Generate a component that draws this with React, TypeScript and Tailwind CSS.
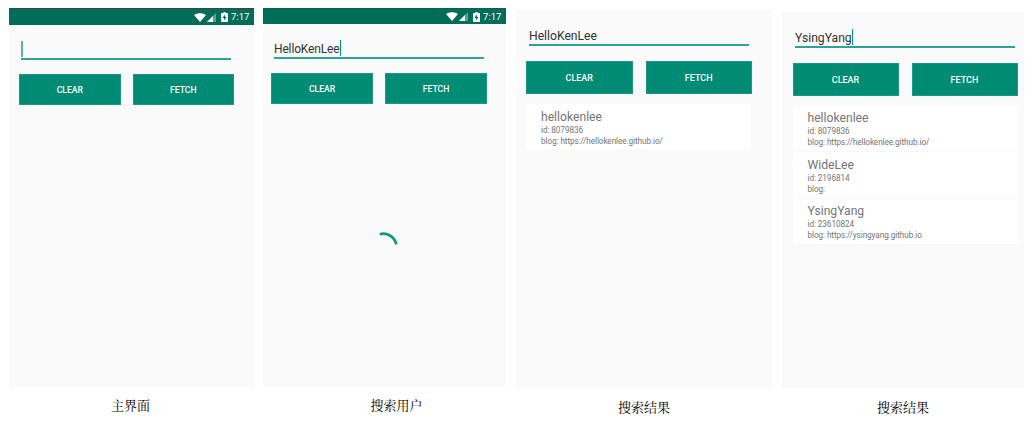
import type { ReactNode } from "react";

type User = { name: string; id: string; blog: string };

const kenLee: User = { name: "hellokenlee", id: "8079836", blog: "https://hellokenlee.github.io/" };
const users: User[] = [
  kenLee,
  { name: "WideLee", id: "2196814", blog: "" },
  { name: "YsingYang", id: "23610824", blog: "https://ysingyang.github.io" },
];

function StatusBar({ className }: { className: string }) {
  return (
    <div className={`flex shrink-0 items-center justify-end border-t bg-[#006d59] text-[9.5px] leading-none text-white ${className}`}>
      <svg className="h-[9px] w-[12px]" viewBox="0 0 11 9" preserveAspectRatio="none" fill="#fff">
        <path d="M0 2.1C3.2-.5 7.8-.5 11 2.1L5.5 9z" />
      </svg>
      <svg className="ml-px h-[9px] w-[9px]" viewBox="0 0 9 9">
        <path d="M9 0v9H0z" fill="#fff" opacity=".35" />
        <path d="M6 3v6H0z" fill="#fff" />
      </svg>
      <svg className="ml-[5px] h-[10px] w-[7px]" viewBox="0 0 6 10" preserveAspectRatio="none">
        <path d="M2 0h2v1h1.3q.7 0 .7.7v7.6q0 .7-.7.7H.7Q0 10 0 9.3V1.7Q0 1 .7 1H2z" fill="#fff" />
        <path d="M3.4 2.4 1.3 6h1.3v2.5L4.7 5H3.4z" fill="#006d59" />
      </svg>
      <span className="ml-[3px] w-[19px] whitespace-nowrap">7:17</span>
    </div>
  );
}

function Field({ text, cursor, className }: { text: string; cursor?: string; className: string }) {
  return (
    <div className={`flex shrink-0 items-center border-b-2 border-[#28a596] whitespace-nowrap text-[#333] ${className}`}>
      <span className="pt-[2px]">{text}</span>
      {cursor && <span className={`h-[16px] shrink-0 ${cursor}`} />}
    </div>
  );
}

function Buttons({ className }: { className: string }) {
  return (
    <div className={`flex shrink-0 font-medium text-white ${className}`}>
      <button className="flex flex-1 items-center justify-center border border-[#1d9885] bg-[#008b74] pt-[2px]">CLEAR</button>
      <button className="flex flex-1 items-center justify-center border border-[#1d9885] bg-[#008b74] pt-[2px]">FETCH</button>
    </div>
  );
}

function UserCard({ user }: { user: User }) {
  return (
    <div className="h-[46.5px] rounded-[2px] border-b border-[#f8f8f8] bg-white pt-[5.9px] pl-[15px] whitespace-nowrap text-[#757575]">
      <div className="text-[12.15px] leading-[15px]">{user.name}</div>
      <div className="text-[8.2px] leading-[11px] tracking-[-0.08px]">id: {user.id}</div>
      <div className="text-[8.2px] leading-[11px] tracking-[-0.08px]">blog: {user.blog}</div>
    </div>
  );
}

function Screen({ caption, className, captionClass, children }: { caption: string; className: string; captionClass: string; children: ReactNode }) {
  return (
    <figure className="flex shrink-0 flex-col">
      <div className={`flex shrink-0 flex-col bg-[#fafafa] ${className}`}>{children}</div>
      <figcaption
        className={`text-center text-[13px] leading-[16px] text-black font-['Noto_Serif_CJK_SC','Noto_Sans_CJK_SC',serif] ${captionClass}`}
      >
        {caption}
      </figcaption>
    </figure>
  );
}

export default function App() {
  return (
    <main className="flex h-[421px] w-[1036px] items-start overflow-hidden bg-white pt-[8px] pl-[9px] font-['Roboto',sans-serif]">
      <Screen caption="主界面" className="h-[379px] w-[245px]" captionClass="mt-[10px] pr-[2px]">
        <StatusBar className="h-[17px] border-[#3f4441] pr-[4px]" />
        <Field text="" cursor="w-[2px] bg-[#55b5aa]" className="mt-[15px] ml-[12px] h-[20px] w-[210px] text-[12px]" />
        <Buttons className="mt-[14px] ml-[10px] h-[31px] w-[215px] gap-[12px] text-[8.6px]" />
      </Screen>
      <div className="w-[9px] shrink-0" />
      <Screen caption="搜索用户" className="h-[379px] w-[243px]" captionClass="mt-[10px] pl-[24px]">
        <StatusBar className="h-[16px] border-[#0a6151] pr-[4px]" />
        <Field
          text="HelloKenLee"
          cursor="w-px bg-[#009688]"
          className="mt-[15px] ml-[11px] h-[20px] w-[210px] text-[12px] tracking-[-0.15px]"
        />
        <Buttons className="mt-[14px] ml-[8px] h-[31px] w-[216px] gap-[12px] text-[8.6px]" />
        <svg className="mt-[124px] ml-[107px] h-[28px] w-[28px]" viewBox="0 0 28 28" fill="none">
          <path d="M9.7 6.2C17 4.3 24.2 8.2 26.4 16.4" stroke="#129a89" strokeWidth="2.7" />
        </svg>
      </Screen>
      <div className="w-[10px] shrink-0" />
      <div className="mt-[2px] shrink-0">
        <Screen caption="搜索结果" className="h-[379px] w-[256px]" captionClass="mt-[10px]">
          <Field text="HelloKenLee" className="mt-[16px] ml-[13px] h-[20px] w-[220px] text-[12.15px]" />
          <Buttons className="mt-[15px] ml-[10px] h-[33px] w-[226px] gap-[13px] text-[9px]" />
          <div className="mt-[10px] ml-[10px] w-[225px]">
            <UserCard user={kenLee} />
          </div>
        </Screen>
      </div>
      <div className="w-[10px] shrink-0" />
      <div className="mt-[4px] shrink-0">
        <Screen caption="搜索结果" className="h-[376px] w-[242px]" captionClass="mt-[11px]">
          <Field text="YsingYang" cursor="w-px bg-[#009688]" className="mt-[16px] ml-[13px] h-[20px] w-[220px] text-[12.15px]" />
          <Buttons className="mt-[15px] ml-[10.5px] h-[33px] w-[225px] gap-[13px] text-[9px]" />
          <div className="mt-[9.5px] ml-[10.5px] w-[225px]">
            {users.map((user) => (
              <UserCard key={user.id} user={user} />
            ))}
          </div>
        </Screen>
      </div>
    </main>
  );
}
